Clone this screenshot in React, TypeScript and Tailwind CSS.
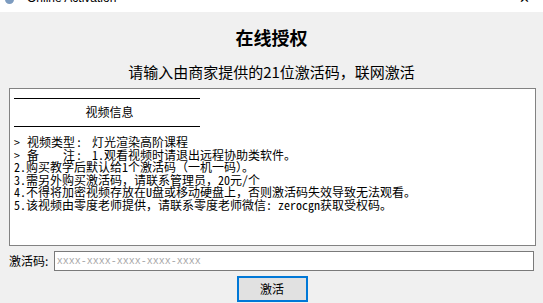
const notes = [
  { n: '2.', t: '购买教学后默认给1个激活码（一机一码）。' },
  { n: '3.', t: '需另外购买激活码，请联系管理员，20元/个' },
  { n: '4.', t: '不得将加密视频存放在U盘或移动硬盘上，否则激活码失效导致无法观看。' },
  { n: '5.', t: '该视频由零度老师提供，请联系零度老师微信: zerocgn获取受权码。' },
]

const Row = ({ children }: { children: React.ReactNode }) => (
  <div className="flex whitespace-pre h-[12.6px] leading-[12.6px]">{children}</div>
)

const App = () => {
  return (
    <div className="w-[543px] h-[303px] overflow-hidden bg-[#f0f0f0] font-['Noto_Sans_CJK_SC',sans-serif] text-black">
      {/* title bar, scrolled off the top */}
      <div className="relative h-[12px] bg-white overflow-hidden">
        <div className="absolute left-[5px] top-[-5px] w-[9px] h-[9px] rounded-full bg-[#7d9cc0]"></div>
        <div className="absolute left-[27px] top-[-10px] text-[12px] leading-[16px] font-['Liberation_Sans',sans-serif]">
          Online Activation
        </div>
        <div className="absolute left-[519px] top-[-9px] text-[13px] leading-[16px] font-['Liberation_Sans',sans-serif]">
          ✕
        </div>
      </div>

      <div className="px-[9px] flex flex-col">
        <h1 className="mt-[13px] text-center text-[18px] leading-[24px] font-bold">在线授权</h1>
        <p className="mt-[13px] text-center text-[15px] leading-[20px]">请输入由商家提供的21位激活码，联网激活</p>

        <div className="mt-[6px] h-[158px] w-[527px] bg-white border border-[#828282] pl-[4px] pt-[9px] text-[12px] font-['Noto_Sans_Mono_CJK_SC','Noto_Sans_CJK_SC',monospace]">
          <div className="w-[186px] border-t border-black"></div>
          <div className="w-[186px] h-[27px] flex items-center justify-center leading-[14px] pb-[1px] pl-[5px]">视频信息</div>
          <div className="w-[186px] border-t border-black"></div>
          <div className="mt-[9px] flex flex-col">
            <Row>
              <span className="w-[13px]">&gt;</span>
              <span className="w-[49px]">视频类型</span>
              <span className="w-[16px]">:</span>
              <span>灯光渲染高阶课程</span>
            </Row>
            <Row>
              <span className="w-[13px]">&gt;</span>
              <span className="w-[49px] flex justify-between pr-[1px]">
                <span>备</span>
                <span>注</span>
              </span>
              <span className="w-[16px]">:</span>
              <span>1.观看视频时请退出远程协助类软件。</span>
            </Row>
            {notes.map((l) => (
              <Row key={l.n}>
                <span className="w-[12px]">{l.n}</span>
                <span>{l.t}</span>
              </Row>
            ))}
          </div>
        </div>

        <div className="mt-[5px] flex items-center h-[20px]">
          <span className="w-[45px] text-[12px] leading-[20px]">激活码:</span>
          <div className="w-[482px] h-[20px] bg-white border border-[#7a7a7a] flex items-center pl-[2px]">
            <span className="text-[10px] text-[#a8a8a8] font-['Liberation_Mono',monospace]">xxxx-xxxx-xxxx-xxxx-xxxx</span>
          </div>
        </div>

        <div className="mt-[5px] flex justify-center">
          <button className="ml-[1px] w-[71px] h-[26px] bg-[#e1e1e1] border-2 border-[#0078d7] text-[12px] leading-[20px]">
            激活
          </button>
        </div>
      </div>
    </div>
  )
}

export default App
